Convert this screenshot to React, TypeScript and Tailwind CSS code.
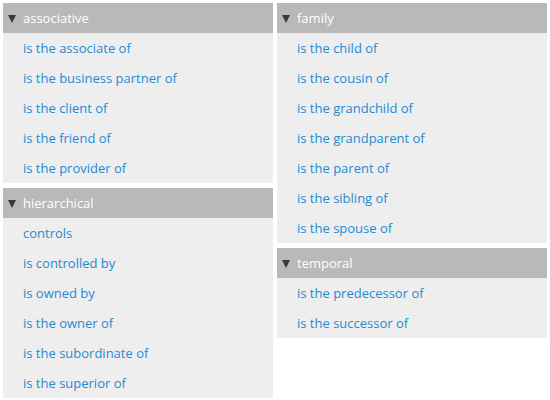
const groups: { title: string; items: string[] }[][] = [
  [
    {
      title: 'associative',
      items: ['is the associate of', 'is the business partner of', 'is the client of', 'is the friend of', 'is the provider of'],
    },
    {
      title: 'hierarchical',
      items: ['controls', 'is controlled by', 'is owned by', 'is the owner of', 'is the subordinate of', 'is the superior of'],
    },
  ],
  [
    {
      title: 'family',
      items: [
        'is the child of',
        'is the cousin of',
        'is the grandchild of',
        'is the grandparent of',
        'is the parent of',
        'is the sibling of',
        'is the spouse of',
      ],
    },
    {
      title: 'temporal',
      items: ['is the predecessor of', 'is the successor of'],
    },
  ],
];

const Panel = ({ title, items }: { title: string; items: string[] }) => (
  <div className="bg-[#eeeeee]">
    <div className="h-[30px] bg-[#b9b9b9] flex items-center pl-[5px] text-white text-[13px]">
      <svg width="8" height="8" viewBox="0 0 8 8" className="mr-[7px] mt-[2px] shrink-0">
        <path d="M0 0H8L4 8Z" fill="#3a3a3a" />
      </svg>
      <span className="pt-[2px]">{title}</span>
    </div>
    {items.map((item) => (
      <div key={item} className="h-[30px] flex items-center pt-[2px] pl-[20px] text-[13px] text-[#1e8bd3]">
        {item}
      </div>
    ))}
  </div>
);

export default function App() {
  return (
    <div
      className="w-[550px] h-[400px] overflow-hidden bg-white pt-[3px] pl-[3px] flex gap-[4px] items-start"
      style={{ fontFamily: '"Open Sans", sans-serif' }}
    >
      {groups.map((col, i) => (
        <div key={i} className="w-[270px] flex flex-col gap-[5px]">
          {col.map((g) => (
            <Panel key={g.title} title={g.title} items={g.items} />
          ))}
        </div>
      ))}
    </div>
  );
}
